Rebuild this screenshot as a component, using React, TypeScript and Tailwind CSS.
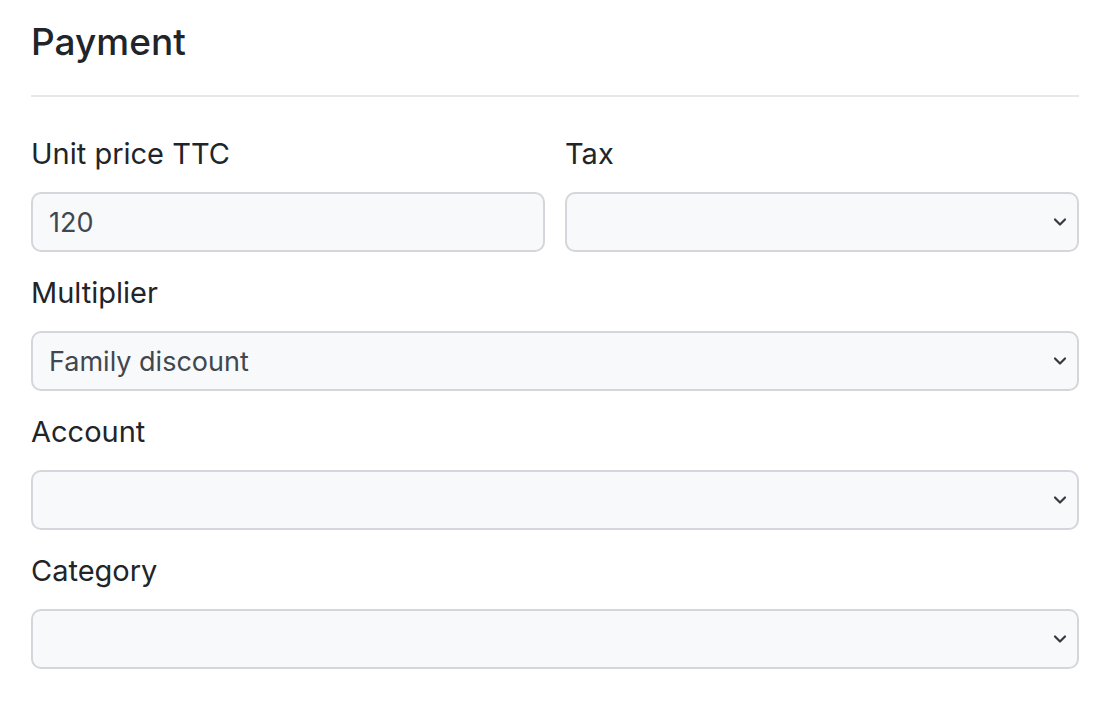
import * as React from 'react';

function Chevron() {
  return (
    <svg
      className="pointer-events-none absolute right-[9px] top-1/2 h-[16px] w-[16px] -translate-y-1/2 text-[#343a40]"
      viewBox="0 0 16 16"
      fill="none"
      stroke="currentColor"
      strokeWidth="2.2"
      strokeLinecap="round"
      strokeLinejoin="round"
      aria-hidden="true"
    >
      <path d="M3 5.5l5 5 5-5" />
    </svg>
  );
}

function Label({ children }: { children: React.ReactNode }) {
  return <label className="block text-[29px] leading-[36px] text-[#212529]">{children}</label>;
}

const boxClass =
  'flex h-[60px] w-full items-center rounded-[10px] border-2 border-[#d4d6db] bg-[#f8f9fb] px-[16px] pt-[2px] text-[27px] text-[#41474f]';

function TextField({ label, value }: { label: string; value: string }) {
  return (
    <div className="flex flex-col gap-[20px]">
      <Label>{label}</Label>
      <div className={boxClass}>{value}</div>
    </div>
  );
}

function SelectField({ label, value }: { label: string; value?: string }) {
  return (
    <div className="flex flex-col gap-[20px]">
      <Label>{label}</Label>
      <div className={`relative ${boxClass}`}>
        <span>{value}</span>
        <Chevron />
      </div>
    </div>
  );
}

export default function App() {
  return (
    <div
      className="w-[1107px] bg-white pl-[31px] pr-[28px] pt-[18px]"
      style={{ fontFamily: 'Inter, "Noto Sans", sans-serif' }}
    >
      <h2 className="text-[37px] font-medium leading-[48px] text-[#212529]">Payment</h2>
      <div className="mt-[29px] h-[2px] bg-[#e6e7e9]" />
      <div className="mt-[39px] flex flex-col gap-[23px]">
        <div className="grid grid-cols-2 gap-[20px]">
          <TextField label="Unit price TTC" value="120" />
          <SelectField label="Tax" />
        </div>
        <SelectField label="Multiplier" value="Family discount" />
        <SelectField label="Account" />
        <SelectField label="Category" />
      </div>
    </div>
  );
}
